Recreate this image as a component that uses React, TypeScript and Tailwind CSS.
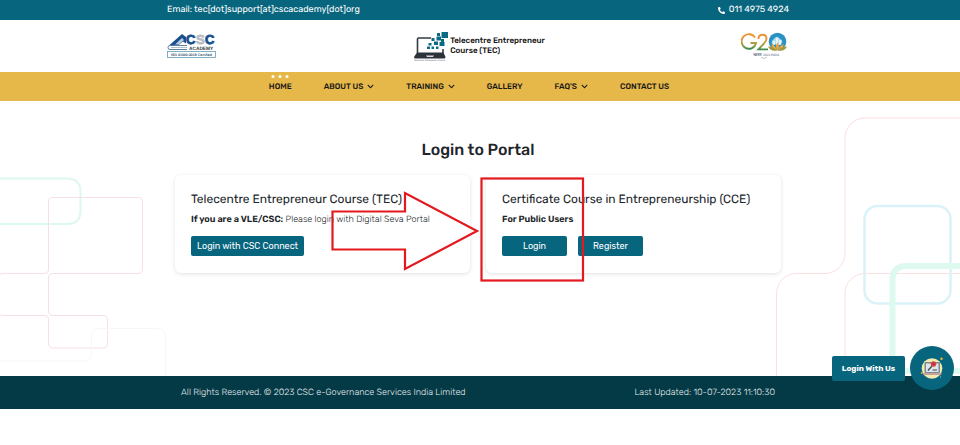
import { FaChevronDown, FaPhoneAlt } from 'react-icons/fa';

interface NavItem {
  label: string;
  hasMenu?: boolean;
  active?: boolean;
}

const navItems: NavItem[] = [
  { label: 'HOME', active: true },
  { label: 'ABOUT US', hasMenu: true },
  { label: 'TRAINING', hasMenu: true },
  { label: 'GALLERY' },
  { label: "FAQ'S", hasMenu: true },
  { label: 'CONTACT US' },
];

function CscLogo() {
  return (
    <svg width="50" height="26" viewBox="0 0 50 26" role="img" aria-label="CSC Academy">
      <path d="M2 12.500 L15 1 L19 4 V10.500 L16 8.500 L11 12.500 Z" fill="#17508c" />
      <path d="M8 11.500 L15 5 L17 7 L12 11.500 Z" fill="#b9cde0" />
      <path d="M20 12.500 H3 Q1 12.500 1 14.400 Q1 16.500 3 16.500 H20" fill="none" stroke="#5d7f9f" strokeWidth="1" />
      <path d="M4 14.500 H20" stroke="#9bb0c4" strokeWidth="0.800" />
      <g fontFamily="Liberation Sans, sans-serif" fontWeight="700">
        <g fontSize="13" strokeWidth="0.800">
          <text x="19" y="11" fill="#15508f" stroke="#15508f">C</text>
          <text x="29" y="11" fill="#b8bec5" stroke="#b8bec5">S</text>
          <text x="38" y="11" fill="#15508f" stroke="#15508f">C</text>
        </g>
        <text x="22" y="16.500" fontSize="4.800" fill="#333a40">ACADEMY</text>
        <text x="4" y="23" fontSize="3.500" fill="#31566d">ISO 21000:2018 Certified</text>
      </g>
      <rect x="0.500" y="18.500" width="48" height="6" fill="none" stroke="#5f9db5" strokeWidth="0.800" />
    </svg>
  );
}

function TecLogo() {
  return (
    <svg width="36" height="31" viewBox="0 0 36 31" aria-hidden="true">
      <path d="M18 7 H5.500 Q4.500 7 4.500 8 V22 M30 18 V22" fill="none" stroke="#343b43" strokeWidth="1.600" />
      <path d="M4 21.500 H30.500 L32.500 26 Q32.500 27.500 31 27.500 H2.500 Q1 27.500 1 26 Z" fill="#2c333b" />
      <path d="M13 24.600 H21 L20 26 H14 Z" fill="#d6dadd" />
      <g fill="#0b6a83">
        <rect x="28.500" y="1" width="6.500" height="6" />
        <rect x="24" y="2" width="3" height="3" />
        <rect x="23.500" y="5.500" width="4.500" height="4" />
        <rect x="18.500" y="7" width="3" height="3" />
        <rect x="28" y="8" width="3" height="3" />
        <rect x="21" y="10.500" width="4" height="3.500" />
        <rect x="26.500" y="11" width="5" height="4" />
        <rect x="15.500" y="12" width="3" height="2.500" />
        <rect x="14" y="15.500" width="3" height="2.500" />
        <rect x="18.500" y="15.500" width="2.500" height="2.500" />
        <rect x="23" y="15.500" width="2.500" height="2.500" />
      </g>
      <text x="1" y="30.300" fontSize="2.200" fill="#555b61" fontFamily="Liberation Sans, sans-serif">
        Telecentre Entrepreneur Course
      </text>
    </svg>
  );
}

function G20Logo() {
  return (
    <svg width="48" height="28" viewBox="0 0 48 28" role="img" aria-label="G20">
      <defs>
        <linearGradient id="g20" x1="0" y1="0" x2="0" y2="1">
          <stop offset="0.3" stopColor="#ec9433" />
          <stop offset="0.8" stopColor="#8ba348" />
          <stop offset="1" stopColor="#3c8a50" />
        </linearGradient>
      </defs>
      <path
        d="M14 5.500 A7.300 7.300 0 1 0 15 11 H9.500"
        fill="none"
        stroke="url(#g20)"
        strokeWidth="1.900"
      />
      <path
        d="M17.500 7 Q17.500 2.800 21.500 2.800 Q25.500 2.800 25.500 6.500 Q25.500 9 22.500 12 L17.500 17.400 H27"
        fill="none"
        stroke="url(#g20)"
        strokeWidth="1.900"
      />
      <circle cx="36.500" cy="9.500" r="8.800" fill="#2b91c4" />
      <path d="M31 12 Q30 9 33 7 Q35 4 37 5 L39 7 Q42 8 41 11 L39 13 Z" fill="#b5dfeb" />
      <path d="M33 13 V9 M36 13 V6 M39 13 V8" stroke="#fff" strokeWidth="1.300" />
      <path
        d="M36.500 10.500 Q39.500 14 36.500 18.500 Q33.500 14 36.500 10.500 M30.500 12 Q35 14 36 18.500 Q30.500 18 30.500 12 M42.500 12 Q38 14 37 18.500 Q42.500 18 42.500 12"
        fill="#f2a93a"
      />
      <path d="M27 14.500 Q32 14 36 18.500 Q30 20 27 14.500 M46 14.500 Q41 14 37 18.500 Q43 20 46 14.500" fill="#a3993c" />
      <g fontFamily="Noto Sans, sans-serif" fill="#4d5b72">
        <text x="12" y="24" fontSize="4" fontWeight="700">भारत</text>
        <text x="22" y="24" fontSize="3">2023 INDIA</text>
      </g>
      <path d="M20 25.500 Q24 27.500 26 25" fill="none" stroke="#8d98aa" strokeWidth="0.600" />
    </svg>
  );
}

function LeftPattern() {
  return (
    <svg className="absolute bottom-0 left-0" width="180" height="275" fill="none" aria-hidden="true">
      <path d="M-2 77.500 H67 Q80.500 77.500 80.500 91 V109.500 Q80.500 123 67 123 H-2" stroke="#dcf8ef" strokeWidth="2" />
      <path
        d="M-1 177 Q-1 172.500 3 172.500 H44 Q48.500 172.500 48.500 168 V101 Q48.500 96.500 53 96.500 H138 Q142.500 96.500 142.500 101 V168 Q142.500 172.500 138 172.500 H53 Q48.500 172.500 48.500 177 V210 Q48.500 214.500 53 214.500 H103 Q107.500 214.500 107.500 219 V242.500 Q107.500 247 103 247 H53 Q48.500 247 48.500 242.500 V219 Q48.500 214.500 44 214.500 H3 Q-1 214.500 -1 210 Z"
        stroke="#f8dfe4"
      />
      <path d="M0 260 H84 Q91.500 260 91.500 252 V235 Q91.500 227.500 99 227.500 H157 Q165.500 227.500 165.500 236 V275" stroke="#f7f7f7" />
    </svg>
  );
}

function RightPattern() {
  return (
    <svg className="absolute right-0 bottom-0" width="200" height="275" fill="none" aria-hidden="true">
      <path
        d="M16.500 275 V192.500 A20 20 0 0 1 36.500 172.500 H65 A20 20 0 0 0 85 152.500 V37 A20 20 0 0 1 105 17 H200 M85 275 V192.500 A20 20 0 0 1 105 172.500 H200"
        stroke="#fbdfe1"
      />
      <rect x="104.500" y="105" width="86" height="97.500" rx="13" stroke="#daf2f9" strokeWidth="2.500" />
      <path d="M132.500 275 V179 Q132.500 165 146.500 165 H200 M144 270 H200" stroke="#def9f0" strokeWidth="6" />
    </svg>
  );
}

function LaptopBadge() {
  return (
    <svg width="24" height="24" viewBox="0 0 24 24" aria-hidden="true">
      <circle cx="12" cy="12.500" r="10.300" fill="#f0ecb0" />
      <rect x="4.500" y="6" width="15.500" height="11" rx="1" fill="#7d8995" />
      <rect x="6" y="7.500" width="12.500" height="8.500" fill="#dfe6ea" />
      <path d="M3 17 H21.500 V18 Q21.500 19 20 19 H4.500 Q3 19 3 18 Z" fill="#c9a49c" />
      <path d="M8 14.500 L12 10" stroke="#394855" strokeWidth="1.300" />
      <path d="M12.500 14 H17" stroke="#394855" />
      <circle cx="13.500" cy="8" r="2.800" fill="#dd3f43" />
      <path d="M12.500 8 H14.500" stroke="#6b2430" strokeWidth="0.800" />
      <circle cx="21.500" cy="2.800" r="1.300" fill="#e2b33e" />
      <circle cx="1.800" cy="17" r="1" fill="#e2b33e" />
      <circle cx="20.500" cy="21" r="0.700" fill="#6bb4c2" />
    </svg>
  );
}

// Points the visitor to the public login
function LoginPointer() {
  return (
    <svg
      className="pointer-events-none absolute top-0 left-0 overflow-visible"
      width="606"
      height="98"
      fill="none"
      stroke="#e3191f"
      strokeWidth="2.200"
      aria-hidden="true"
    >
      <path d="M157.500 36.500 H230 V18 L302 56 L230 94 V74.500 H157.500 Z" />
      <rect x="306.500" y="3.500" width="101.500" height="102" />
    </svg>
  );
}

function Header() {
  return (
    <header>
      <div className="bg-[#08657e] pr-1 text-white">
        <div className="mx-auto flex h-5 max-w-[622px] items-center justify-between text-[9px] leading-4">
          <span>Email: tec[dot]support[at]cscacademy[dot]org</span>
          <span className="flex items-center gap-1">
            <FaPhoneAlt className="size-[7px]" />
            011 4975 4924
          </span>
        </div>
      </div>

      <div className="bg-white pr-1">
        <div className="mx-auto flex max-w-[622px] items-center justify-between py-2">
          <CscLogo />
          <div className="flex h-9 items-center gap-px">
            <TecLogo />
            <p className="text-[8px] leading-[10px] font-medium text-[#111]">
              Telecentre Entrepreneur
              <br />
              Course (TEC)
            </p>
          </div>
          <G20Logo />
        </div>
      </div>

      <nav className="bg-[#e6b749] pr-[22px]">
        <ul className="flex h-[29px] items-center justify-center gap-8 text-[8px] font-medium text-[#161616]">
          {navItems.map((item) => (
            <li key={item.label} className="relative">
              {item.active && (
                <span className="absolute -top-1.5 left-1/2 flex -translate-x-1/2 gap-1">
                  {Array.from({ length: 3 }).map((_, index) => (
                    <span key={index} className="size-[3px] rounded-full bg-white"></span>
                  ))}
                </span>
              )}
              <a href="#" className="flex items-center gap-1">
                {item.label}
                {item.hasMenu && <FaChevronDown className="size-[7px]" />}
              </a>
            </li>
          ))}
        </ul>
      </nav>
    </header>
  );
}

export default function App() {
  return (
    <div className="bg-white font-['Rubik','Roboto',sans-serif] text-[#212529] [text-rendering:geometricPrecision]">
      <Header />

      <main className="relative overflow-hidden pt-[37px] pr-1 pb-[103px]">
        <LeftPattern />
        <RightPattern />

        <div className="relative mx-auto max-w-[622px] px-2">
          <h1 className="text-center text-[16px] leading-6 font-medium">Login to Portal</h1>

          <div className="relative mt-[13px] grid grid-cols-2 gap-4">
            <section className="rounded-md bg-white px-4 pt-[15px] pb-[17px] shadow-[0_1px_4px_rgba(0,0,0,0.12)]">
              <h2 className="text-[12px] leading-[18px]">Telecentre Entrepreneur Course (TEC)</h2>
              <p className="mt-1 text-[9px] leading-4 font-light">
                <b className="font-semibold">If you are a VLE/CSC:</b> Please login with Digital Seva Portal
              </p>
              <button className="mt-2 block h-5 rounded-xs bg-[#08657e] px-1.5 pt-px text-[9px] text-white">
                Login with CSC Connect
              </button>
            </section>

            <section className="rounded-md bg-white px-4 pt-[15px] pb-[17px] shadow-[0_1px_4px_rgba(0,0,0,0.12)]">
              <h2 className="text-[12px] leading-[18px]">Certificate Course in Entrepreneurship (CCE)</h2>
              <p className="mt-1 text-[9px] leading-4">
                <b className="font-semibold">For Public Users</b>
              </p>
              <div className="mt-2 flex gap-[11px]">
                <button className="h-5 w-[65px] rounded-xs bg-[#08657e] pt-px text-[9px] text-white">Login</button>
                <button className="h-5 w-[65px] rounded-xs bg-[#08657e] pt-px text-[9px] text-white">Register</button>
              </div>
            </section>

            <LoginPointer />
          </div>
        </div>
      </main>

      <footer className="bg-[#043a46] pr-1 text-[#e6edef]">
        <div className="mx-auto flex h-[33px] max-w-[622px] items-center justify-between px-3.5 pt-0.5 text-[9px] font-light">
          <span>All Rights Reserved. © 2023 CSC e-Governance Services India Limited</span>
          <span>Last Updated: 10-07-2023 11:10:30</span>
        </div>
      </footer>

      <div className="fixed right-1.5 bottom-[55px] flex items-center gap-[5px]">
        <button className="h-[25px] w-[73px] rounded-xs bg-[#08657e] pt-px text-[8px] font-bold text-white">
          Login With Us
        </button>
        <button
          aria-label="Open login assistant"
          className="flex size-11 items-center justify-center rounded-full bg-[#08657e]"
        >
          <LaptopBadge />
        </button>
      </div>
    </div>
  );
}
